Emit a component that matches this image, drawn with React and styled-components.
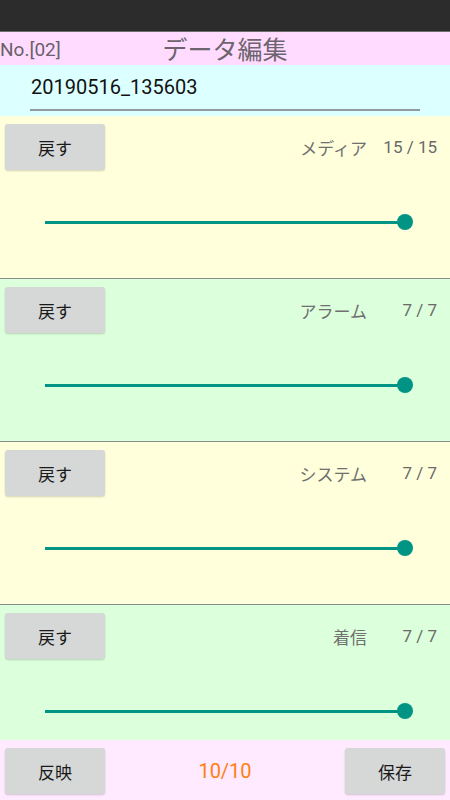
import React from "react";
import styled, { createGlobalStyle } from "styled-components";

const Global = createGlobalStyle`
  html, body { margin: 0; padding: 0; }
  body {
    width: 450px;
    height: 800px;
    overflow: hidden;
    font-family: Roboto, "Noto Sans CJK JP", sans-serif;
  }
`;

const Screen = styled.div`
  width: 450px;
  height: 800px;
  display: flex;
  flex-direction: column;
  overflow: hidden;
`;

const StatusBar = styled.div`
  height: 31px;
  flex: none;
  background: #2c2c2c;
  border-bottom: 1px solid #6e6e6e;
`;

const Header = styled.div`
  height: 33px;
  flex: none;
  background: #ffdcff;
  display: grid;
  grid-template-columns: 1fr auto 1fr;
  align-items: center;
`;

const No = styled.div`
  font-size: 19px;
  color: #6a606a;
  padding-left: 0;
  margin-top: 2px;
`;

const Title = styled.div`
  font-family: "Noto Sans CJK JP", sans-serif;
  font-size: 25px;
  color: #6e646e;
  line-height: 33px;
  margin-top: -1px;
`;

const NameBox = styled.div`
  height: 51px;
  flex: none;
  background: #dcffff;
  padding: 0 30px;
  box-sizing: border-box;
`;

const NameText = styled.div`
  font-size: 20px;
  color: #111;
  line-height: 26px;
  margin-top: 9px;
  height: 37px;
  padding-left: 1px;
  box-sizing: border-box;
  border-bottom: 2px solid #8e9ca0;
`;

const List = styled.div`
  flex: 1;
  overflow: hidden;
  display: flex;
  flex-direction: column;
`;

const Section = styled.div`
  flex: none;
  height: 163px;
  box-sizing: border-box;
  background: ${(p) => p.$bg};
  border-bottom: 1px solid #8a8a8a;
  padding: 8px 13px 0 5px;
  display: flex;
  flex-direction: column;
`;

const TopRow = styled.div`
  display: flex;
  align-items: center;
`;

const Button = styled.button`
  width: 100px;
  height: 46px;
  border: none;
  border-radius: 3px;
  background: #d6d7d7;
  box-shadow: 0 1px 2px rgba(0, 0, 0, 0.18);
  font-family: "Noto Sans CJK JP", sans-serif;
  font-size: 17px;
  color: #1a1a1a;
  padding: 0;
  cursor: pointer;
`;

const Label = styled.div`
  margin-left: auto;
  font-family: "Noto Sans CJK JP", sans-serif;
  font-size: 17px;
  color: #707070;
`;

const Value = styled.div`
  width: 70px;
  text-align: right;
  font-size: 17px;
  color: #6a6a6a;
`;

const SliderWrap = styled.div`
  margin-top: 44px;
  padding-left: 40px;
  height: 16px;
  display: flex;
  align-items: center;
`;

const Track = styled.div`
  position: relative;
  width: 360px;
  height: 3px;
  background: #009484;
`;

const Thumb = styled.div`
  position: absolute;
  right: -8px;
  top: 50%;
  width: 16px;
  height: 16px;
  margin-top: -8px;
  border-radius: 50%;
  background: #009484;
`;

const Footer = styled.div`
  height: 60px;
  flex: none;
  background: #ffeaff;
  display: flex;
  align-items: flex-start;
  justify-content: space-between;
  padding: 8px 5px 0 5px;
  box-sizing: border-box;
`;

const Counter = styled.div`
  font-size: 20px;
  color: #ff7f10;
  line-height: 46px;
`;

const items = [
  { label: "メディア", value: "15 / 15", bg: "#ffffdc" },
  { label: "アラーム", value: "7 / 7", bg: "#dcffdc" },
  { label: "システム", value: "7 / 7", bg: "#ffffdc" },
  { label: "着信", value: "7 / 7", bg: "#dcffdc" },
];

export default function App() {
  return (
    <>
      <Global />
      <Screen>
        <StatusBar />
        <Header>
          <No>No.[02]</No>
          <Title>データ編集</Title>
          <div />
        </Header>
        <NameBox>
          <NameText>20190516_135603</NameText>
        </NameBox>
        <List>
          {items.map((it) => (
            <Section key={it.label} $bg={it.bg}>
              <TopRow>
                <Button>戻す</Button>
                <Label>{it.label}</Label>
                <Value>{it.value}</Value>
              </TopRow>
              <SliderWrap>
                <Track>
                  <Thumb />
                </Track>
              </SliderWrap>
            </Section>
          ))}
        </List>
        <Footer>
          <Button>反映</Button>
          <Counter>10/10</Counter>
          <Button>保存</Button>
        </Footer>
      </Screen>
    </>
  );
}
